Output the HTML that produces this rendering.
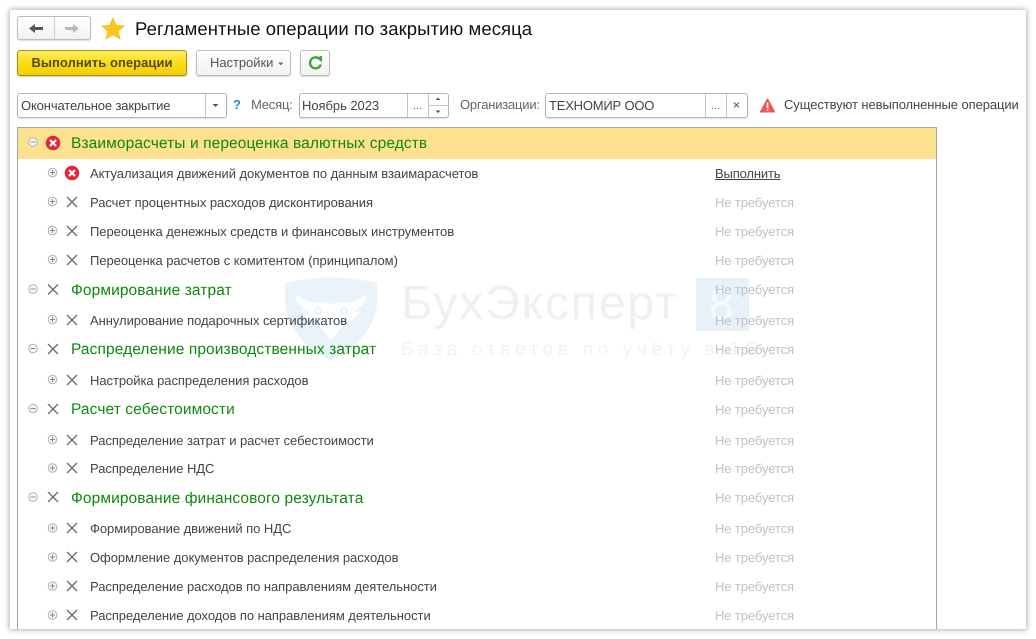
<!DOCTYPE html>
<html lang="ru"><head><meta charset="utf-8"><title>Регламентные операции</title>
<style>
html,body{margin:0;padding:0;background:#fff}
body{width:1036px;height:639px;overflow:hidden;position:relative;font-family:"Liberation Sans","DejaVu Sans",sans-serif;text-rendering:geometricPrecision}
#all{position:absolute;left:0;top:0;width:1036px;height:639px;filter:blur(.3px)}
#win{position:absolute;left:10px;top:10px;width:1016px;height:619px;background:#fff;box-shadow:0 0 5px 1px rgba(0,0,0,.3)}
.a{position:absolute;white-space:nowrap}
.t{position:absolute;white-space:nowrap;font-size:13px;line-height:16px;color:#444;left:90px;letter-spacing:-.05px;margin-top:1px}
.g{position:absolute;white-space:nowrap;font-size:15.5px;line-height:20px;color:#0d8a0d;left:71px;letter-spacing:.1px}
.n{position:absolute;white-space:nowrap;font-size:13px;line-height:16px;color:#c2c0c6;left:715px;letter-spacing:-.1px;margin-top:1px}
.box{position:absolute;box-sizing:border-box;border:1px solid #b4b4b4;border-radius:3px;background:#fff;box-shadow:0 1px 1px rgba(0,0,0,.12)}
.btn{position:absolute;box-sizing:border-box;border:1px solid #bdbdbd;border-radius:3px;background:linear-gradient(#fff,#f1f1f1);box-shadow:0 1px 1px rgba(0,0,0,.15)}
.f{font-size:13px;color:#444;line-height:16px;letter-spacing:-.05px}
.s{position:absolute;left:0;top:0}
</style></head><body><div id="all">
<div id="win"></div>

<!-- nav -->
<div class="btn" style="left:17px;top:16px;width:74px;height:24px"></div>
<div class="a" style="left:54px;top:17px;width:1px;height:22px;background:#cfcfcf"></div>
<svg class="s" width="1036" height="639" style="z-index:3">
<path d="M29 28.500l6-4.500v3h8v3h-8v3z" fill="#555"/>
<path d="M79 28.500l-6-4.500v3h-8v3h8v3z" fill="#b8b8b8"/>
<path d="M113 17.500l3.400 7.600 8.200.8-6.200 5.400 1.900 8-7.300-4.300-7.300 4.300 1.900-8-6.200-5.400 8.200-.8z" fill="#fbc81e" stroke="#f0bb18" stroke-width=".5"/>
<path d="M319.500 59a5.500 5.500 0 1 0 1.300 5.500" fill="none" stroke="#37a337" stroke-width="2.300"/>
<path d="M316.500 58l5.500-2.500v6.500z" fill="#37a337"/>
<path d="M278 62.500h5.500l-2.750 2.800z" fill="#666"/>
<path d="M212.500 104h6l-3 3z" fill="#555"/>
<path d="M760 111.500l6.700-12.500q.8-1 1.600 0l6.700 12.500q.3 1-.8 1h-13.400q-1.100 0-.8-1z" fill="#e8594f"/>
<path d="M767.500 102.500v5.500M767.500 109.200v1.600" stroke="#fff" stroke-width="1.700"/>
<path d="M734 102.500l5 5M739 102.500l-5 5" stroke="#666" stroke-width="1.200"/>
<path d="M435.500 100h5l-2.500-2.500z M435.500 110.500h5l-2.500 2.500z" fill="#555"/>
</svg>
<div class="a" style="left:135px;top:18px;font-size:18.500px;line-height:22px;color:#111;letter-spacing:.07px">Регламентные операции по закрытию месяца</div>

<!-- toolbar -->
<div class="a" style="left:17px;top:50px;width:170px;height:26px;box-sizing:border-box;border:1px solid #a98c10;border-radius:3px;background:linear-gradient(#fdee5c,#f9d90f 60%,#f3cf0a);box-shadow:0 1px 1px rgba(0,0,0,.2);font-weight:bold;font-size:13px;line-height:24px;color:#574a10;text-align:center;letter-spacing:.05px">Выполнить операции</div>
<div class="btn f" style="left:196px;top:50px;width:95px;height:26px;line-height:24px;padding-left:13px;color:#555">Настройки</div>
<div class="btn" style="left:300px;top:50px;width:30px;height:26px"></div>

<!-- filter row -->
<div class="box f" style="left:17px;top:93px;width:210px;height:25px;line-height:23px;padding-left:3px;letter-spacing:-.13px">Окончательное закрытие</div>
<div class="a" style="left:205px;top:94px;width:1px;height:23px;background:#c4c4c4"></div>
<div class="a" style="left:233px;top:97px;font-size:13px;line-height:16px;font-weight:bold;color:#2a8ac8">?</div>
<div class="a f" style="left:251px;top:97px;color:#666;letter-spacing:-.2px">Месяц:</div>
<div class="box f" style="left:299px;top:93px;width:150px;height:25px;line-height:23px;padding-left:2px">Ноябрь 2023</div>
<div class="a" style="left:407px;top:94px;width:1px;height:23px;background:#c4c4c4"></div>
<div class="a" style="left:428px;top:94px;width:1px;height:23px;background:#c4c4c4"></div>
<div class="a" style="left:429px;top:105px;width:20px;height:1px;background:#c4c4c4"></div>
<div class="a" style="left:413px;top:99px;font-size:11px;line-height:14px;color:#666">...</div>
<div class="a f" style="left:460px;top:97px;color:#666;letter-spacing:-.2px">Организации:</div>
<div class="box f" style="left:545px;top:93px;width:203px;height:25px;line-height:23px;padding-left:3px;letter-spacing:-.2px">ТЕХНОМИР ООО</div>
<div class="a" style="left:705px;top:94px;width:1px;height:23px;background:#c4c4c4"></div>
<div class="a" style="left:726px;top:94px;width:1px;height:23px;background:#c4c4c4"></div>
<div class="a" style="left:711px;top:99px;font-size:11px;line-height:14px;color:#666">...</div>
<div class="a f" style="left:784px;top:97px;letter-spacing:-.08px">Существуют невыполненные операции</div>

<!-- table frame -->
<div class="a" style="left:17px;top:127px;width:920px;height:502px;box-sizing:border-box;border:1px solid #a6a6a6;border-bottom:0;background:#fff"></div>
<div class="a" style="left:18px;top:128px;width:918px;height:31px;background:#fde18f"></div>

<!-- watermark -->
<svg class="s" width="1036" height="639" style="z-index:1">
<path d="M285 283q46-11 92 0v22q-6 36-46 56q-40-20-46-56z" fill="#eaf3fa"/>
<path d="M295 294q14 10 28 8q5 0 8 3q3-3 8-3q14 2 28-8q-2 12-14 18q4 0 8-1q-6 10-16 11q-6 10-14 18q-8-8-14-18q-10-1-16-11q4 1 8 1q-12-6-14-18z" fill="#fff" opacity=".85"/>
<circle cx="318" cy="311" r="4" fill="#eaf3fa"/><circle cx="318" cy="311" r="1.800" fill="#fff"/>
<circle cx="344" cy="311" r="4" fill="#eaf3fa"/><circle cx="344" cy="311" r="1.800" fill="#fff"/>
<rect x="696" y="278" width="53" height="53" fill="#e6f1f9"/>
</svg>
<div class="a" style="z-index:1;left:401px;top:279px;font-size:48px;line-height:50px;color:#eef0f3;letter-spacing:1.900px">БухЭксперт</div>
<div class="a" style="z-index:1;left:709px;top:280px;font-size:44px;line-height:50px;color:#f6fafc">8</div>
<div class="a" style="z-index:1;left:401px;top:338px;font-size:19px;line-height:24px;color:#f1f2f4;letter-spacing:4.700px">База ответов по учёту в 1С</div>

<!-- icons -->
<svg class="s" width="1036" height="639" style="z-index:2">
<defs>
<g id="p"><circle cx="0" cy="0" r="4.300" fill="#f8f8f8" stroke="#b0b0b0"/><path d="M-2.500 0h5M0-2.500v5" stroke="#888" stroke-width="1"/></g>
<g id="m"><circle cx="0" cy="0" r="4.300" fill="#f8f8f8" stroke="#b0b0b0"/><path d="M-2.500 0h5" stroke="#888" stroke-width="1"/></g>
<g id="x"><path d="M-5-5L5 5M5-5L-5 5" stroke="#6e6e6e" stroke-width="1.400" fill="none"/></g>
<g id="e"><circle r="7.300" fill="#e0283c"/><path d="M-3-3L3 3M3-3L-3 3" stroke="#fff" stroke-width="2.200"/></g>
</defs>
<use href="#m" x="33" y="142"/><use href="#e" x="53" y="143"/>
<use href="#p" x="52.500" y="172.500"/><use href="#e" x="72" y="173"/>
<use href="#p" x="52.500" y="201.500"/><use href="#x" x="72" y="202"/>
<use href="#p" x="52.500" y="230.500"/><use href="#x" x="72" y="231"/>
<use href="#p" x="52.500" y="259.500"/><use href="#x" x="72" y="260"/>
<use href="#m" x="33" y="289"/><use href="#x" x="53" y="289.500"/>
<use href="#p" x="52.500" y="319.500"/><use href="#x" x="72" y="320"/>
<use href="#m" x="33" y="348.500"/><use href="#x" x="53" y="349"/>
<use href="#p" x="52.500" y="379.500"/><use href="#x" x="72" y="380"/>
<use href="#m" x="33" y="408.500"/><use href="#x" x="53" y="409"/>
<use href="#p" x="52.500" y="439.500"/><use href="#x" x="72" y="440"/>
<use href="#p" x="52.500" y="468"/><use href="#x" x="72" y="468"/>
<use href="#m" x="33" y="497"/><use href="#x" x="53" y="497"/>
<use href="#p" x="52.500" y="528"/><use href="#x" x="72" y="528"/>
<use href="#p" x="52.500" y="557"/><use href="#x" x="72" y="557"/>
<use href="#p" x="52.500" y="586"/><use href="#x" x="72" y="586"/>
<use href="#p" x="52.500" y="615"/><use href="#x" x="72" y="615"/>
</svg>

<!-- rows -->
<div style="position:absolute;left:0;top:0;z-index:4">
<div class="g" style="top:134px">Взаиморасчеты и переоценка валютных средств</div>
<div class="t" style="top:165px">Актуализация движений документов по данным взаимарасчетов</div>
<div class="n" style="top:165px;color:#444;text-decoration:underline;letter-spacing:-.15px">Выполнить</div>
<div class="t" style="top:194px">Расчет процентных расходов дисконтирования</div><div class="n" style="top:194px">Не требуется</div>
<div class="t" style="top:223px">Переоценка денежных средств и финансовых инструментов</div><div class="n" style="top:223px">Не требуется</div>
<div class="t" style="top:252px">Переоценка расчетов с комитентом (принципалом)</div><div class="n" style="top:252px">Не требуется</div>
<div class="g" style="top:281px">Формирование затрат</div><div class="n" style="top:281px">Не требуется</div>
<div class="t" style="top:312px">Аннулирование подарочных сертификатов</div><div class="n" style="top:312px">Не требуется</div>
<div class="g" style="top:340px">Распределение производственных затрат</div><div class="n" style="top:341px">Не требуется</div>
<div class="t" style="top:372px">Настройка распределения расходов</div><div class="n" style="top:372px">Не требуется</div>
<div class="g" style="top:400px">Расчет себестоимости</div><div class="n" style="top:401px">Не требуется</div>
<div class="t" style="top:432px">Распределение затрат и расчет себестоимости</div><div class="n" style="top:432px">Не требуется</div>
<div class="t" style="top:460px">Распределение НДС</div><div class="n" style="top:460px">Не требуется</div>
<div class="g" style="top:489px">Формирование финансового результата</div><div class="n" style="top:489px">Не требуется</div>
<div class="t" style="top:520px">Формирование движений по НДС</div><div class="n" style="top:520px">Не требуется</div>
<div class="t" style="top:549px">Оформление документов распределения расходов</div><div class="n" style="top:549px">Не требуется</div>
<div class="t" style="top:578px">Распределение расходов по направлениям деятельности</div><div class="n" style="top:578px">Не требуется</div>
<div class="t" style="top:607px">Распределение доходов по направлениям деятельности</div><div class="n" style="top:607px">Не требуется</div>
</div>
</div></body></html>
